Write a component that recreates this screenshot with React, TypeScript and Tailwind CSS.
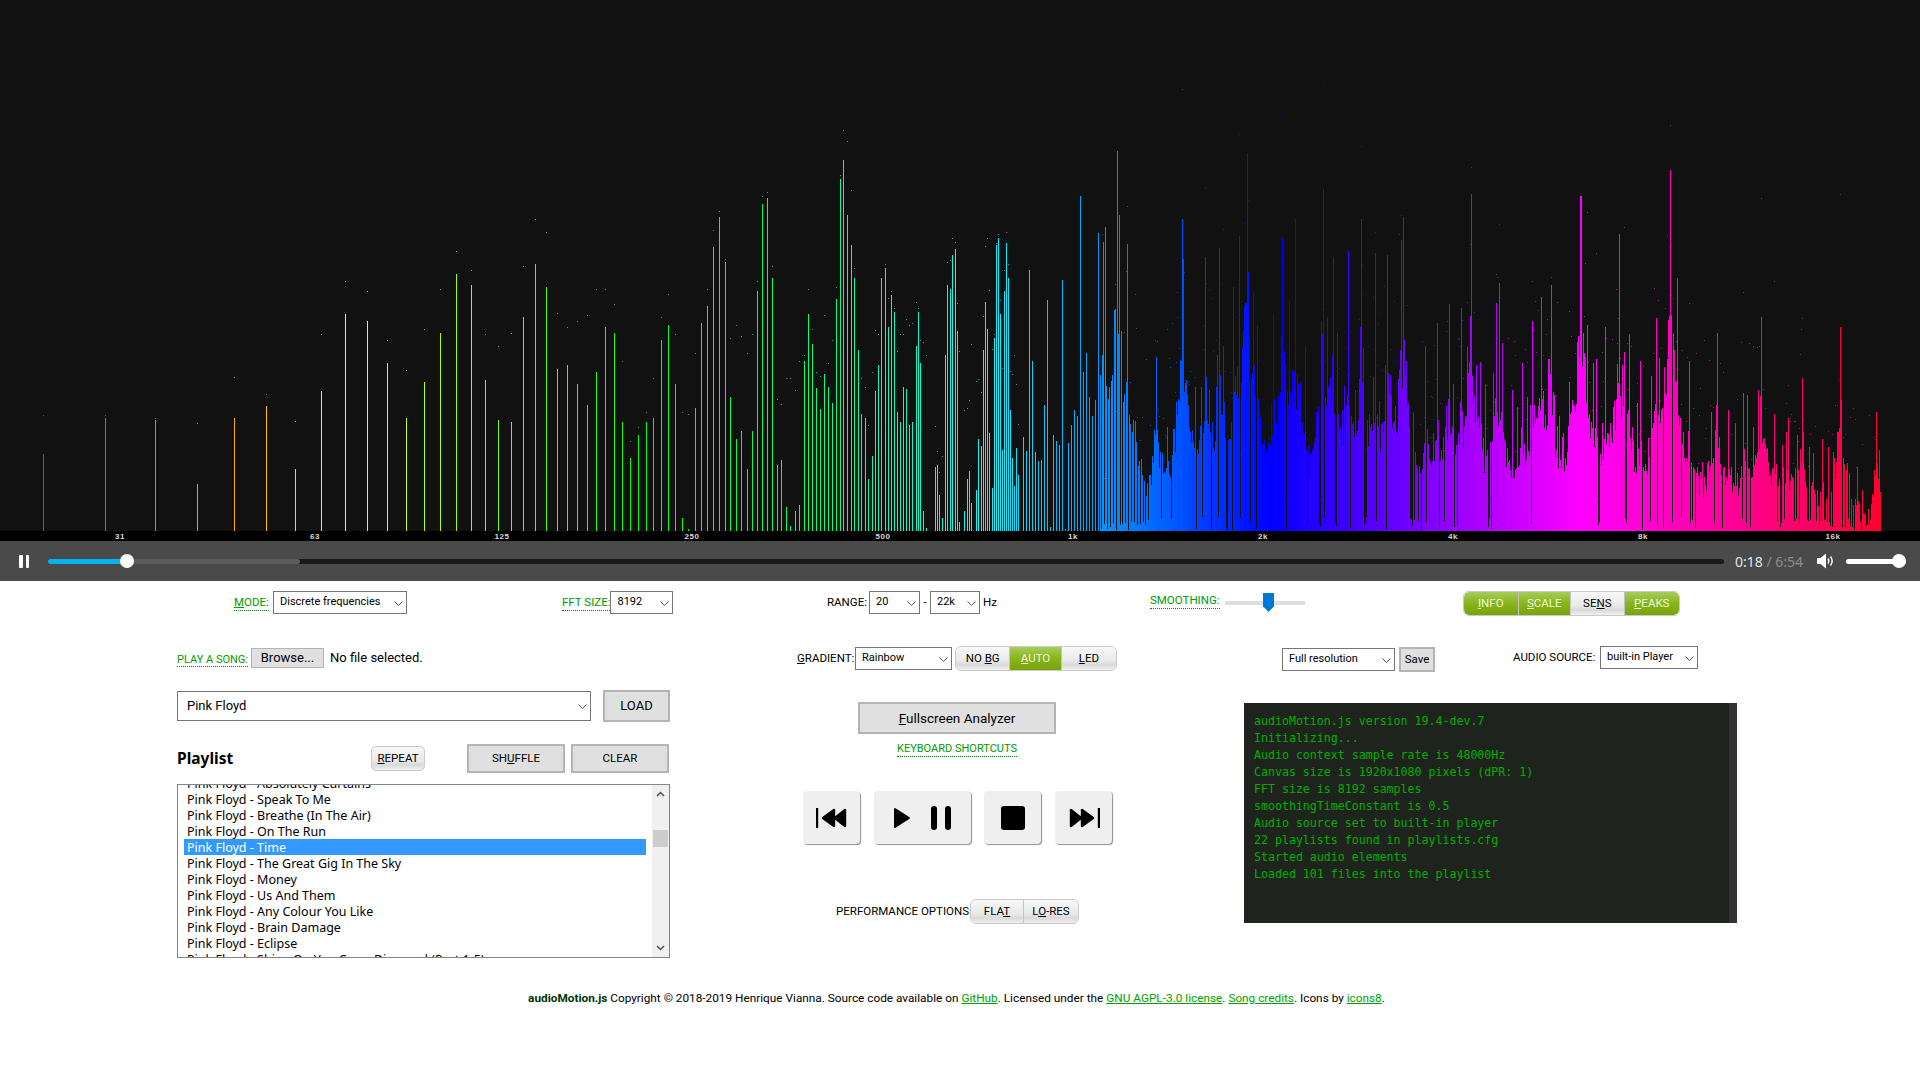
import React from 'react';

// peaks traced from the picture, [x, top, peak dot] in 3x crop coordinates
const crop = (ox: number, oy: number, list: number[][]) =>
  list.map(([x, top, dot]) => [ox + x / 3, oy + top / 3, dot === undefined ? -1 : oy + dot / 3]);

const LOW = crop(20, 230, [[70,672,556],[256,564,556],[406,570,565],[532,762,578],[643,564,442],[739,527,493],[826,717,572],[904,482,311],[976,253,152],[1042,272,184],[1102,399,330],[1159,564,420],[1213,456,298],[1261,310,178],[1309,132,64],[1354,165,121],[1396,450,311],[1435,570,348],[1474,577,308]]);

const MID = crop(520, 130, [[10,560,408],[46,401,268],[79,471,307],[112,718,548],[142,705,592],[172,763,573],[202,826,554],[229,725,478],[256,591,478],[283,610,522],[307,877,694],[331,985,932],[355,915,891],[379,877,847],[400,865,745],[424,630,561],[445,585,491],[466,763,612],[487,1163,847],[505,1198,853],[526,833,670],[544,578],[562,528,478],[580,350,300],[598,261,243],[616,395,388],[631,801,624],[649,927,586],[664,903,618],[682,1018,668],[697,903,612],[712,483,453],[727,222,198],[742,204,186],[757,445,408],[772,1005,808],[784,991,821],[799,1132,745],[811,1188,745],[826,1144,780],[838,1125,694],[853,693,675],[865,552,478],[877,642,597],[889,775,726],[901,838,739],[913,732,554],[925,770,698],[937,820,630],[949,508,472],[961,148,134],[970,90,0],[982,255,33],[994,344,180],[1003,445,414],[1015,660],[1024,852,745],[1036,864,770],[1045,1048,885],[1057,979,726],[1066,782,599],[1075,705,612],[1084,445],[1096,414,402],[1105,591,503],[1114,496,484],[1123,547,535],[1132,846,662],[1141,877,612],[1150,770,612],[1159,776,567],[1168,884,586],[1177,877,580],[1187,648,516],[1195,547,535],[1201,699,631],[1210,1144,637],[1219,1194,675],[1244,1011,887],[1252,1005,962],[1258,1094,1025],[1267,1163,978],[1276,675],[1282,465,395],[1291,477,390],[1297,376,325],[1306,357,336],[1312,604,518],[1318,1176,662],[1333,1144,841],[1342,1048,835],[1348,1023,809],[1354,1119,643],[1369,1081,754],[1375,928,748],[1384,947,786],[1390,660,558],[1396,515,348],[1402,598,323],[1408,909,481],[1417,1074,656],[1423,624,612],[1429,345,338],[1435,324,313],[1441,553,509],[1447,960,713],[1453,483,421],[1459,338,306],[1465,445,402],[1471,839,723],[1477,985,732],[1483,1068,675],[1489,953,761],[1495,1036,881]]);

const HIGH = [
  ...[[1031,270],[1047,300],[1062,280],[1082,196],[1098,233]],
  ...crop(1100, 140, [[10,305],[16,262],[52,33],[58,225],[82,313],[100,840],[127,1005],[168,650],[185,940],[200,860],[218,866],[247,237],[250,358],[286,740],[316,352],[358,325],[368,618],[400,440],[416,287],[442,40],[460,460],[472,555],[520,522],[546,295],[568,478],[585,238],[614,618],[670,148],[680,530],[700,352],[712,580],[745,333],[784,238],[824,340],[862,346],[902,300],[910,232],[938,815],[976,618],[1010,548],[1046,492],[1060,733],[1084,505],[1112,162],[1140,665],[1156,733],[1178,700],[1187,490],[1198,430],[1237,780],[1267,670],[1297,543],[1310,835],[1324,472],[1346,657],[1354,434],[1390,880],[1408,727],[1442,168],[1462,555]]),
  ...crop(1500, 130, [[5,640],[36,780],[52,830],[67,700],[80,800],[97,572],[108,865],[124,500],[145,687],[154,465],[178,858],[186,920],[208,756],[216,810],[241,197],[250,610],[262,585],[280,700],[289,687],[316,590],[328,950],[340,830],[357,312],[372,665],[388,612],[412,820],[421,693],[445,925],[454,738],[469,565],[478,685],[510,120],[532,445],[568,693],[590,1010],[622,1000],[634,845],[651,610],[685,840],[705,880],[730,790],[742,795],[760,890],[775,780],[784,560],[823,852],[847,945],[858,905],[865,865],[890,915],[905,743],[927,952],[940,970],[967,927],[985,952],[1000,965],[1021,590],[1030,985],[1048,1030],[1072,1010],[1087,1080],[1129,845],[1138,960]]),
];

const BASE = 531;
const HUES = [[0,0],[345,60],[640,120],[1010,185],[1270,240],[1580,300],[1890,350]];

const hueAt = (x: number) => {
  for (let i = 1; i < HUES.length; i++) {
    if (x <= HUES[i][0]) {
      const [x0, h0] = HUES[i - 1];
      const [x1, h1] = HUES[i];
      return h0 + ((x - x0) / (x1 - x0)) * (h1 - h0);
    }
  }
  return 350;
};
const colorAt = (x: number) => `hsl(${Math.round(hueAt(x))},100%,50%)`;

let seed = 12345;
const rnd = () => {
  seed = (seed * 1103515245 + 12345) & 0x7fffffff;
  return seed / 0x7fffffff;
};

// fills in the dense part of the spectrum around the traced peaks
const buildColumns = () => {
  const cols: Record<number, number> = {};
  for (let x = 1022; x <= 1880; x++) {
    const fade = x > 1790 ? Math.max(0, (1880 - x) / 90) : 1;
    cols[x] = (22 + rnd() * 50) * fade;
  }
  HIGH.forEach(([px, top]) => {
    const h = BASE - top;
    const w = 3 + h / 30;
    const r = Math.round(w * 3);
    for (let dx = -r; dx <= r; dx++) {
      const x = Math.round(px) + dx;
      if (cols[x] === undefined) continue;
      const v = h * 0.7 * Math.exp(-Math.abs(dx) / w) * (0.6 + rnd() * 0.45);
      if (v > cols[x]) cols[x] = v;
    }
  });
  Object.keys(cols).forEach((k) => {
    const x = +k;
    const gap = x > 1780 ? 0.3 : 0.1;
    if (rnd() < gap) cols[x] = rnd() * 14;
    // thin comb of lines below 1.1k, wider blocks up to the 1.15k gap
    if (x < 1100 && x % 3 !== 0) cols[x] = 0;
    if (x >= 1100 && x < 1146 && x % 3 === 0) cols[x] = rnd() * 10;
  });
  HIGH.forEach(([px, top]) => {
    const x = Math.round(px);
    cols[x < 1100 ? x - (x % 3) : x] = BASE - top;
  });
  return Object.keys(cols).map((k) => [+k, cols[+k]]);
};

const COLUMNS = buildColumns();
const DOTS = COLUMNS.filter(([x, h]) => h > 0 && x > 1100 && rnd() < 0.4 && x < 1885).map(([x, h]) => [x, BASE - h - 8 - rnd() * 130]);
const LABELS: [number, string][] = [[120,'31'],[315,'63'],[502,'125'],[692,'250'],[883,'500'],[1073,'1k'],[1263,'2k'],[1453,'4k'],[1643,'8k'],[1833,'16k']];

const Spectrum = () => (
  <svg width="1920" height="541" viewBox="0 0 1920 541" className="block" shapeRendering="crispEdges">
    <rect width="1920" height="531" fill="#111111" />
    <rect y="531" width="1920" height="10" fill="#000000" />
    {[...LOW, ...MID].map(([x, top, dot], i) => (
      <g key={i} fill={colorAt(x)}>
        <rect x={Math.round(x)} y={top} width="1" height={BASE - top} />
        {dot >= 0 && <rect x={Math.round(x)} y={dot} width="1" height="1" opacity="0.7" />}
      </g>
    ))}
    {COLUMNS.map(([x, h]) => (
      <rect key={x} x={x} y={BASE - h} width="1" height={h} fill={colorAt(x)} />
    ))}
    {DOTS.map(([x, y]) => (
      <rect key={x} x={x} y={Math.round(y)} width="1" height="1" fill={colorAt(x)} opacity="0.75" />
    ))}
    {LABELS.map(([x, t]) => (
      <text key={t} x={x} y="539" textAnchor="middle" fill="#d8d8d8" fontSize="8" fontWeight="700" letterSpacing="0.6" fontFamily="Liberation Sans, sans-serif" shapeRendering="auto">
        {t}
      </text>
    ))}
  </svg>
);

const Player = () => (
  <div className="flex h-10 items-center bg-[#4a4a4a]">
    <div className="ml-[19px] flex gap-[3px]">
      <div className="h-[13px] w-[3.5px] rounded-[1px] bg-white" />
      <div className="h-[13px] w-[3.5px] rounded-[1px] bg-white" />
    </div>
    <div className="ml-[19px] flex h-[5px] w-[1676px] items-center rounded-full bg-[#191919]">
      <div className="flex h-[5px] w-[252px] items-center rounded-full bg-[#5c5c5c]">
        <div className="h-[5px] w-[75px] rounded-l-full bg-[#00b4f0]" />
        <div className="-ml-[3px] h-[14px] w-[14px] rounded-full bg-white" />
      </div>
    </div>
    <div className="ml-[11px] w-[66px] font-['Noto_Sans',sans-serif] text-[14px] whitespace-nowrap text-[#dfe7ec]">
      0:18 <span className="text-[#8c8c8c]">/ 6:54</span>
    </div>
    <svg width="19" height="18" viewBox="0 0 19 18" className="ml-[15px]">
      <path d="M1 6h3.5L10 1.5v15L4.500 12H1z" fill="#fff" />
      <path d="M12 6.500c1 1.500 1 3.500 0 5M14.500 4.500c2 2.700 2 6.300 0 9" stroke="#fff" strokeWidth="1.400" fill="none" />
    </svg>
    <div className="ml-[11px] flex h-[5px] w-[60px] items-center justify-end rounded-full bg-white">
      <div className="h-[14px] w-[14px] rounded-full bg-white" />
    </div>
  </div>
);

const Chevron = () => (
  <svg width="9" height="5" viewBox="0 0 9 5" className="pointer-events-none absolute top-1/2 right-[4px] -mt-[2px]">
    <path d="M.5.5 4.500 4.500 8.500.5" stroke="#555" fill="none" />
  </svg>
);

const Select = ({ value, className }: { value: string; className: string }) => (
  <div className={`relative shrink-0 ${className}`}>
    <select className="h-full w-full appearance-none border border-[#767676] bg-white pl-[6px] text-black outline-none" defaultValue={value}>
      <option>{value}</option>
    </select>
    <Chevron />
  </div>
);

const Help = ({ children, className = 'text-[11.500px]' }: { children: React.ReactNode; className?: string }) => (
  <span className={`border-b border-dotted border-[#008a00] leading-[15px] whitespace-nowrap text-[#009a00] ${className}`}>{children}</span>
);

const Toggle = ({ on, first, last, className, children }: { on?: boolean; first?: boolean; last?: boolean; className: string; children: React.ReactNode }) => (
  <div
    className={`flex h-full items-center justify-center ${className} ${first ? 'rounded-l-[5px]' : ''} ${last ? 'rounded-r-[5px]' : ''} ${
      on
        ? 'bg-[linear-gradient(#a8cc5a,#88b41c_50%,#78a30a)] text-[#eef8d8]'
        : 'bg-[linear-gradient(#f8f8f8,#e9e9e9_60%,#d9d9d9_78%,#f0f0f0)] text-black'
    }`}
  >
    <span>{children}</span>
  </div>
);

const Group = ({ className, children }: { className: string; children: React.ReactNode }) => (
  <div className={`flex shrink-0 divide-x divide-[#c4c4c4] rounded-[6px] border border-[#cacaca] ${className}`}>{children}</div>
);

const TopRow = () => (
  <div className="mt-[10px] flex h-[25px] text-[11.500px] text-black">
    <div className="ml-[234px] flex h-[23px] w-[173px] items-center justify-between">
      <Help><u>M</u>ODE:</Help>
      <Select value="Discrete frequencies" className="h-[23px] w-[134px] text-[11px]" />
    </div>
    <div className="ml-[155px] flex h-[23px] w-[110px] items-center justify-between">
      <Help>FFT SIZE:</Help>
      <Select value="8192" className="h-[23px] w-[63px] text-[11px]" />
    </div>
    <div className="ml-[155px] flex h-[23px] w-[169px] items-center">
      <span className="w-[42px] shrink-0">RANGE:</span>
      <Select value="20" className="h-[23px] w-[51px] text-[11px]" />
      <span className="w-[10px] shrink-0 text-center">-</span>
      <Select value="22k" className="h-[23px] w-[50px] text-[11px]" />
      <span className="ml-[3px]">Hz</span>
    </div>
    <div className="ml-[154px] flex h-[23px] w-[155px] items-center justify-between">
      <Help className="-mt-[3px] text-[11.500px]">SMOOTHING:</Help>
      <div className="flex h-[4px] w-[80px] items-center bg-[#dedede]">
        <div className="ml-[38px] h-[19px] w-[11px] bg-[#0078d7] [clip-path:polygon(0_0,100%_0,100%_70%,50%_100%,0_70%)]" />
      </div>
    </div>
    <Group className="ml-[158px] h-[25px] w-[217px] overflow-hidden">
      <Toggle on first className="w-[55px]"><u>I</u>NFO</Toggle>
      <Toggle on className="w-[53px]"><u>S</u>CALE</Toggle>
      <Toggle className="w-[54px]">SE<u>N</u>S</Toggle>
      <Toggle on last className="w-[55px]"><u>P</u>EAKS</Toggle>
    </Group>
  </div>
);

const TRACKS = ['Absolutely Curtains','Speak To Me','Breathe (In The Air)','On The Run','Time','The Great Gig In The Sky','Money','Us And Them','Any Colour You Like','Brain Damage','Eclipse','Shine On You Crazy Diamond (Part 1-5)'];

const flatButton = 'flex shrink-0 items-center justify-center border-2 border-[#b4b4b4] bg-[#e0e0e0] text-black';

const LeftColumn = () => (
  <div className="ml-[177px] w-[493px]">
    <div className="mt-[2px] flex h-5 items-center">
      <div className="w-[74px] shrink-0"><Help className="text-[11px]">PLAY A SONG:</Help></div>
      <div className="flex h-5 w-[73px] shrink-0 items-center justify-center border border-[#b4b4b4] bg-[#e0e0e0] text-[13px]">Browse...</div>
      <span className="ml-[6px] text-[13px]">No file selected.</span>
    </div>
    <div className="mt-[22px] flex h-8 items-center justify-between">
      <Select value="Pink Floyd" className="h-[30px] w-[414px] text-[13px] [&>select]:pl-[9px]" />
      <div className={`h-8 w-[67px] text-[13px] ${flatButton}`}>LOAD</div>
    </div>
    <div className="mt-[22px] flex h-[29px] items-center">
      <h2 className="w-[194px] shrink-0 font-['Noto_Sans',sans-serif] text-[15.500px] font-bold">Playlist</h2>
      <div className="flex h-[25px] w-[54px] shrink-0 items-center justify-center rounded-[5px] border border-[#cacaca] bg-[linear-gradient(#f8f8f8,#e9e9e9_60%,#d9d9d9_78%,#f0f0f0)] text-[11.500px]"><span><u>R</u>EPEAT</span></div>
      <div className={`ml-[42px] h-[29px] w-[98px] text-[11.500px] ${flatButton}`}><span>SH<u>U</u>FFLE</span></div>
      <div className={`ml-[6px] h-[29px] w-[98px] text-[11.500px] ${flatButton}`}>CLEAR</div>
    </div>
    <div className="mt-[11px] flex h-[174px] overflow-hidden border border-[#82868c] font-['Noto_Sans',sans-serif] text-[12.500px]">
      <div className="ml-[6px] -mt-[10px] h-[200px] w-[462px] shrink-0">
        {TRACKS.map((t) => (
          <div key={t} className={`h-4 pl-[3px] leading-[17px] whitespace-nowrap ${t === 'Time' ? 'bg-[#3399ff] text-white' : 'text-black'}`}>
            Pink Floyd - {t}
          </div>
        ))}
      </div>
      <div className="ml-auto flex w-[17px] flex-col items-center bg-[#f0f0f0] pt-[6px] pb-[6px]">
        <svg width="9" height="6" viewBox="0 0 9 6"><path d="M1 5 4.500 1.500 8 5" stroke="#505050" strokeWidth="1.500" fill="none" /></svg>
        <div className="mt-[33px] h-[17px] w-[15px] bg-[#cdcdcd]" />
        <svg width="9" height="6" viewBox="0 0 9 6" className="mt-auto"><path d="M1 1 4.500 4.500 8 1" stroke="#505050" strokeWidth="1.500" fill="none" /></svg>
      </div>
    </div>
  </div>
);

const transport = 'flex h-[53px] items-center justify-center rounded-[4px] bg-[#efefef] shadow-[1px_1px_1px_#8f8f8f]';

const CenterColumn = () => (
  <div className="ml-[127px] w-[320px]">
    <div className="flex h-[25px] items-center text-[11.500px]">
      <span className="w-[58px] shrink-0 whitespace-nowrap"><u>G</u>RADIENT:</span>
      <Select value="Rainbow" className="h-[23px] w-[97px] text-[11px]" />
      <Group className="ml-[3px] h-[25px] w-[162px] overflow-hidden">
        <Toggle first className="w-[55px]">NO <u>B</u>G</Toggle>
        <Toggle on className="w-[52px]"><u>A</u>UTO</Toggle>
        <Toggle last className="w-[55px]"><u>L</u>ED</Toggle>
      </Group>
    </div>
    <div className="mt-[31px] ml-[61px] flex h-8 w-[198px] items-center justify-center border-2 border-[#b4b4b4] bg-[#e0e0e0] text-[13.500px]">
      <span><u>F</u>ullscreen Analyzer</span>
    </div>
    <div className="mt-[7px] flex justify-center">
      <Help className="text-[11px]">KEYBOARD SHORTCUTS</Help>
    </div>
    <div className="mt-[34px] ml-[6px] flex">
      <div className={`w-[57px] ${transport}`}>
        <svg width="32" height="22" viewBox="0 0 32 22"><path d="M1 1v20M29 3v16L19 11zM18 3v16L7 11z" stroke="#000" strokeWidth="2.400" strokeLinejoin="round" /></svg>
      </div>
      <div className={`ml-[14px] w-[97px] gap-[20px] ${transport}`}>
        <svg width="18" height="22" viewBox="0 0 18 22"><path d="M2 2v18l14-9z" stroke="#000" strokeWidth="2" strokeLinejoin="round" /></svg>
        <svg width="21" height="24" viewBox="0 0 21 24"><rect x="0" y="0" width="6" height="24" rx="3" /><rect x="14" y="0" width="6" height="24" rx="3" /></svg>
      </div>
      <div className={`ml-[13px] w-[57px] ${transport}`}>
        <div className="h-6 w-6 rounded-[3px] bg-black" />
      </div>
      <div className={`ml-[14px] w-[57px] ${transport}`}>
        <svg width="32" height="22" viewBox="0 0 32 22"><path d="M31 1v20M3 3v16l10-8zM14 3v16l11-8z" stroke="#000" strokeWidth="2.400" strokeLinejoin="round" /></svg>
      </div>
    </div>
    <div className="mt-[55px] ml-[39px] flex h-[25px] items-center text-[11.500px]">
      <span className="w-[134px] shrink-0 whitespace-nowrap">PERFORMANCE OPTIONS:</span>
      <Group className="h-[25px] w-[109px] overflow-hidden">
        <Toggle first className="w-[54px]">FLA<u>T</u></Toggle>
        <Toggle last className="w-[55px]">L<u>O</u>-RES</Toggle>
      </Group>
    </div>
  </div>
);

const LOG = ['audioMotion.js version 19.4-dev.7','Initializing...','Audio context sample rate is 48000Hz','Canvas size is 1920x1080 pixels (dPR: 1)','FFT size is 8192 samples','smoothingTimeConstant is 0.5','Audio source set to built-in player','22 playlists found in playlists.cfg','Started audio elements','Loaded 101 files into the playlist'];

const RightColumn = () => (
  <div className="ml-[127px] w-[493px]">
    <div className="flex h-[26px] items-start text-[11.500px]">
      <Select value="Full resolution" className="mt-[2px] ml-[38px] h-[23px] w-[113px] text-[11px]" />
      <div className="mt-[1px] ml-[4px] flex h-[25px] w-[36px] shrink-0 items-center justify-center border-2 border-[#b4b4b4] bg-[#e0e0e0]">Save</div>
      <span className="ml-[78px] leading-[23px] whitespace-nowrap">AUDIO SOURCE:</span>
      <Select value="built-in Player" className="mr-[39px] ml-auto h-[23px] w-[98px] text-[11px]" />
    </div>
    <div className="mt-[31px] flex h-[220px] bg-[#1e231d]">
      <div className="flex-1 pt-[10px] pl-[10px] font-['DejaVu_Sans_Mono',monospace] text-[11.600px] leading-[17px] text-[#00b000]">
        {LOG.map((l) => <div key={l} className="whitespace-pre">{l}</div>)}
      </div>
      <div className="w-2 bg-[#333333]" />
    </div>
  </div>
);

export default function App() {
  return (
    <div className="min-h-screen overflow-hidden bg-white font-['Roboto',sans-serif] text-black">
      <Spectrum />
      <Player />
      <TopRow />
      <div className="mt-[30px] flex">
        <LeftColumn />
        <CenterColumn />
        <RightColumn />
      </div>
      <p className="mt-[31px] pr-[7px] text-center text-[11.800px] leading-[18px]">
        <b className="text-[#003300]">audioMotion.js</b> Copyright © 2018-2019 Henrique Vianna. Source code available on{' '}
        <a className="text-[#00a000] underline">GitHub</a>. Licensed under the{' '}
        <a className="text-[#00a000] underline">GNU AGPL-3.0 license</a>.{' '}
        <a className="text-[#00a000] underline">Song credits</a>. Icons by{' '}
        <a className="text-[#00a000] underline">icons8</a>.
      </p>
    </div>
  );
}
